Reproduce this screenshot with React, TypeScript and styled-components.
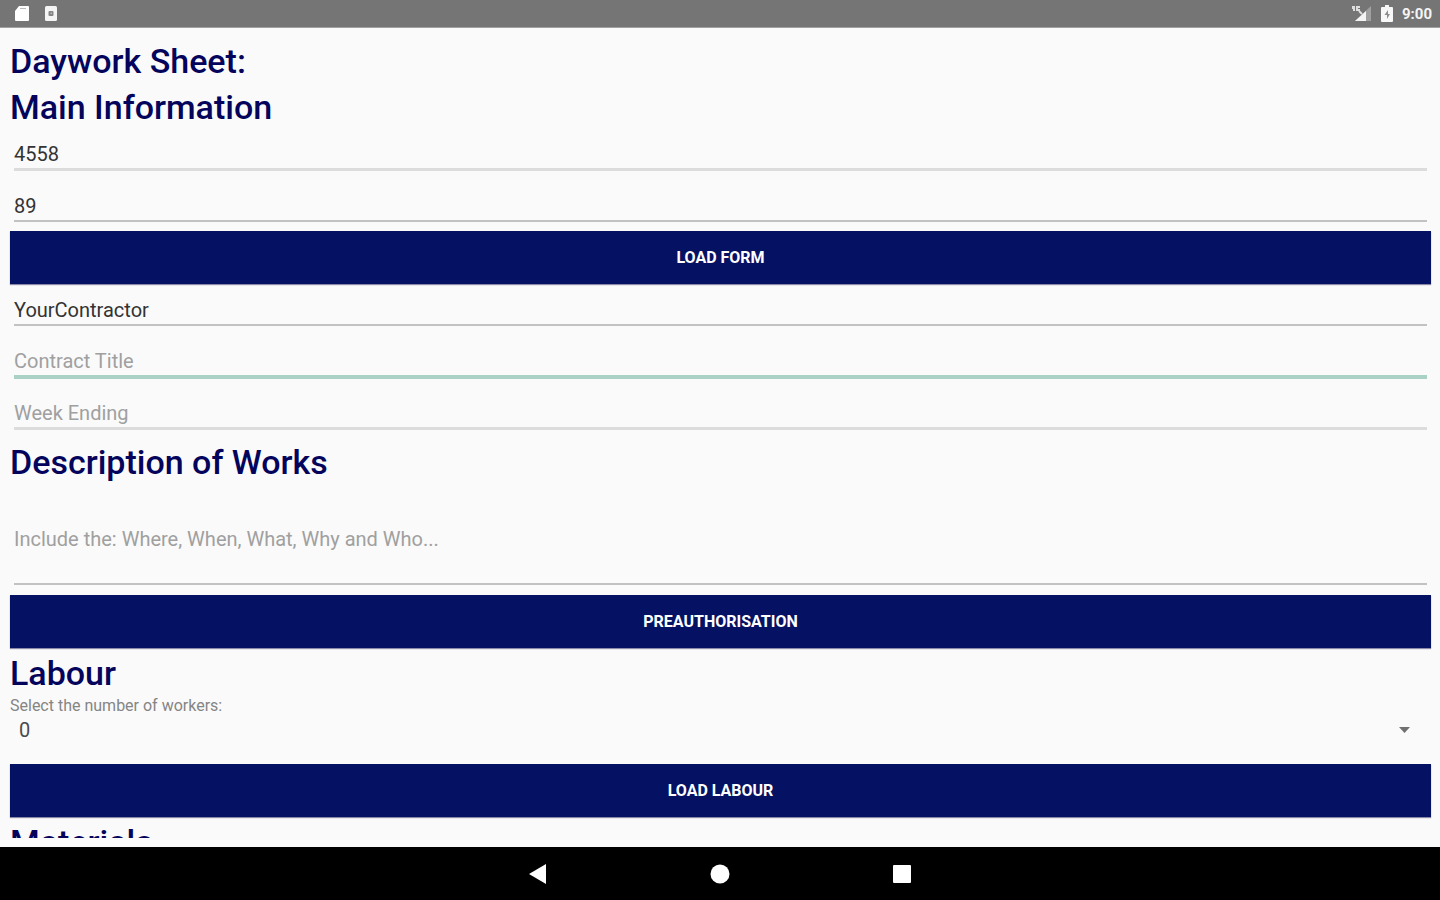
import React from "react";
import styled, { createGlobalStyle } from "styled-components";

const GlobalStyle = createGlobalStyle`
  *, *::before, *::after { box-sizing: border-box; }
  body {
    margin: 0;
    background: #fafafa;
    font-family: Roboto, "Liberation Sans", sans-serif;
  }
  input, textarea, select, button { font-family: inherit; }
`;

const Screen = styled.div`
  display: flex;
  flex-direction: column;
  height: 100vh;
  background: #fafafa;
`;

const StatusBar = styled.header`
  display: flex;
  flex: none;
  align-items: center;
  justify-content: space-between;
  height: 28px;
  padding: 0 8px 0 14px;
  border-bottom: 1px solid #a2a2a2;
  background: #757575;
  color: #f4f4f4;
`;

const StatusGroup = styled.div<{ $gap: number }>`
  display: flex;
  align-items: center;
  gap: ${(p) => p.$gap}px;
`;

const Clock = styled.time`
  font-size: 15px;
  font-weight: 700;
  line-height: 28px;
`;

const Form = styled.form`
  flex: 1;
  min-height: 0;
  margin-bottom: 9px;
  padding: 10px 9px 0 10px;
  overflow-y: auto;
  scrollbar-width: none;
`;

const Section = styled.section<{ $spaced?: boolean }>`
  display: flex;
  flex-direction: column;
  padding-top: ${(p) => (p.$spaced ? 2 : 0)}px;
`;

const Heading = styled.h2`
  margin: 0;
  color: #04045c;
  font-size: 34px;
  font-weight: 500;
  line-height: 46px;
`;

const PageTitle = styled(Heading).attrs({ as: "h1" })``;

const underlines = {
  soft: "3px solid #dcdcdc",
  normal: "2px solid #c2c2c2",
  active: "4px solid #a9d1c5",
};

const Field = styled.input<{ $line: keyof typeof underlines }>`
  height: ${(p) => (p.$line === "active" ? 44 : 42)}px;
  margin: 0 4px 9px;
  padding: ${(p) => (p.$line === "soft" ? 10 : 12)}px 0 0;
  border: 0;
  border-bottom: ${(p) => underlines[p.$line]};
  border-radius: 0;
  outline: 0;
  background: transparent;
  color: #333;
  font-size: 20px;
  &::placeholder { color: #a0a0a0; opacity: 1; }
`;

const FirstFields = styled.div`
  display: flex;
  flex-direction: column;
  margin-top: -1px;
`;

const Description = styled.textarea`
  height: 100px;
  margin: 0 4px 10px;
  padding: 42px 0 0;
  border: 0;
  border-bottom: ${underlines.normal};
  outline: 0;
  resize: none;
  background: transparent;
  color: #333;
  font-size: 20px;
  line-height: 24px;
  &::placeholder { color: #a0a0a0; opacity: 1; }
`;

const ActionButton = styled.button`
  height: 53px;
  padding: 0;
  border: 0;
  background: #051263;
  box-shadow: 0 1px 1px #8a8aa8;
  color: #fff;
  font-size: 16px;
  font-weight: 700;
  text-transform: uppercase;
`;

const Label = styled.label`
  color: #858585;
  font-size: 16px;
  line-height: 20px;
`;

const SelectRow = styled.div`
  display: grid;
  align-items: center;
  height: 28px;
  margin-bottom: 20px;
  > * { grid-area: 1 / 1; }
  > svg { justify-self: end; margin-right: 21px; pointer-events: none; }
`;

const Select = styled.select`
  height: 28px;
  padding: 0 9px;
  border: 0;
  appearance: none;
  background: transparent;
  color: #4a4a4a;
  font-size: 20px;
`;

const NavBar = styled.nav`
  display: flex;
  flex: none;
  align-items: center;
  justify-content: center;
  gap: 142px;
  height: 53px;
  background: #000;
`;

const NavButton = styled.button`
  display: flex;
  align-items: center;
  justify-content: center;
  width: 40px;
  height: 40px;
  padding: 0;
  border: 0;
  background: transparent;
  color: #fff;
`;

export default function App() {
  return (
    <>
      <GlobalStyle />
      <Screen>
        <StatusBar>
          <StatusGroup $gap={16}>
            <svg width="15" height="17" viewBox="0 0 15 17" aria-label="Storage">
              <path d="M5 1h9a1 1 0 0 1 1 1v13a1 1 0 0 1-1 1H2a1 1 0 0 1-1-1V6z" fill="#fff" />
              <path d="M6 3.5h6" stroke="#bcbcbc" strokeWidth="1" />
            </svg>
            <svg width="12" height="15" viewBox="0 0 12 15" aria-label="Notification">
              <rect width="12" height="15" rx="1.5" fill="#f4f4f4" />
              <rect x="3.5" y="5" width="5" height="5" rx="1" fill="#858585" />
              <rect x="5.5" y="6.5" width="1.5" height="1.5" fill="#bbb" />
            </svg>
          </StatusGroup>
          <StatusGroup $gap={9}>
            <svg width="21" height="17" viewBox="0 0 21 17" aria-label="Signal">
              <path d="M20 1v15H4z" fill="#a0a0a0" />
              <path d="M15 6v10H4z" fill="#f4f4f4" />
              <path d="M1 1h3v5H2V4H1zM5 1h4v2H7v1h2v2H5z" fill="#dedede" />
              <path d="M8 6l3 3" stroke="#dedede" strokeWidth="2" />
            </svg>
            <svg width="12" height="17" viewBox="0 0 12 17" aria-label="Battery">
              <path d="M4 0h4v2h3q1 0 1 1v13q0 1-1 1H1q-1 0-1-1V3q0-1 1-1h3z" fill="#f7f7f7" />
              <path d="M7 5L3.500 10H6v4l3-5H7z" fill="#8c8c8c" />
            </svg>
            <Clock>9:00</Clock>
          </StatusGroup>
        </StatusBar>

        <Form onSubmit={(e) => e.preventDefault()}>
          <Section>
            <PageTitle>Daywork Sheet:</PageTitle>
            <Heading>Main Information</Heading>
            <FirstFields>
              <Field $line="soft" aria-label="Form number" defaultValue="4558" />
              <Field $line="normal" aria-label="Sheet number" defaultValue="89" />
            </FirstFields>
            <ActionButton type="button">Load form</ActionButton>
            <Field $line="normal" aria-label="Contractor" defaultValue="YourContractor" />
            <Field $line="active" aria-label="Contract Title" placeholder="Contract Title" />
            <Field $line="soft" aria-label="Week Ending" placeholder="Week Ending" />
          </Section>

          <Section>
            <Heading>Description of Works</Heading>
            <Description
              aria-label="Description of Works"
              placeholder="Include the: Where, When, What, Why and Who..."
            />
            <ActionButton type="button">Preauthorisation</ActionButton>
          </Section>

          <Section $spaced>
            <Heading>Labour</Heading>
            <Label htmlFor="workers">Select the number of workers:</Label>
            <SelectRow>
              <Select id="workers" defaultValue="0">
                <option>0</option>
                <option>1</option>
                <option>2</option>
                <option>3</option>
              </Select>
              <svg width="11" height="6" viewBox="0 0 11 6" aria-hidden="true">
                <path d="M0 0h11L5.500 6z" fill="#707070" />
              </svg>
            </SelectRow>
            <ActionButton type="button">Load labour</ActionButton>
          </Section>

          <Section $spaced>
            <Heading>Materials</Heading>
          </Section>
        </Form>

        <NavBar>
          <NavButton aria-label="Back">
            <svg width="20" height="20" viewBox="0 0 20 20">
              <path d="M18 0v20L1 10z" fill="currentColor" />
            </svg>
          </NavButton>
          <NavButton aria-label="Home">
            <svg width="20" height="20" viewBox="0 0 20 20">
              <circle cx="10" cy="10" r="9.500" fill="currentColor" />
            </svg>
          </NavButton>
          <NavButton aria-label="Recent apps">
            <svg width="20" height="20" viewBox="0 0 20 20">
              <rect x="1" y="1" width="18" height="18" rx="1" fill="currentColor" />
            </svg>
          </NavButton>
        </NavBar>
      </Screen>
    </>
  );
}
